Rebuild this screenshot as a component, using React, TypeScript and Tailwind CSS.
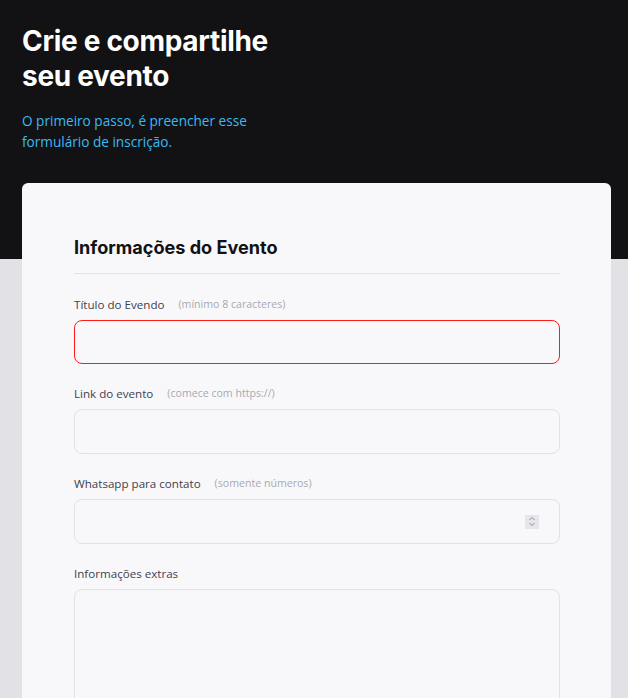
import React from "react";

const body = { fontFamily: '"Open Sans", "Liberation Sans", sans-serif' };

function Field({ label, hint, children }: { label: string; hint?: string; children: React.ReactNode }) {
  return (
    <div className="flex flex-col">
      <label className="flex items-center h-[18px] text-[11.6px] text-[#41414d]" style={body}>
        {label}
        {hint && <span className="ml-[14px] text-[10.6px] text-[#a8a8b3]">{hint}</span>}
      </label>
      {children}
    </div>
  );
}

export default function App() {
  return (
    <div className="min-h-[698px] bg-[#e1e1e6] relative" style={body}>
      <div className="bg-[#121214] h-[259px] px-[22px] pt-[24px]">
        <h1
          className="text-white font-bold text-[28px] leading-[35px] tracking-[-0.3px]"
          style={{ fontFamily: 'Inter, "Liberation Sans", sans-serif' }}
        >
          Crie e compartilhe
          <br />
          seu evento
        </h1>
        <p className="mt-[16px] text-[#3bb9f2] text-[13.6px] leading-[21px]">
          O primeiro passo, é preencher esse
          <br />
          formulário de inscrição.
        </p>
      </div>
      <div className="-mt-[76px] ml-[22px] w-[589px] bg-[#f8f8fa] rounded-t-[6px] pl-[52px] pr-[51px] pt-[50px] pb-[40px] min-h-[515px]">
        <h2
          className="text-[18.1px] font-bold text-[#121214] leading-[28px] pb-[12px] border-b border-[#e1e1e6]"
          style={{ fontFamily: 'Inter, "Liberation Sans", sans-serif' }}
        >
          Informações do Evento
        </h2>
        <div className="mt-[22px] flex flex-col gap-[21px]">
          <Field label="Título do Evendo" hint="(mínimo 8 caracteres)">
            <input className="mt-[6px] h-[44px] w-full rounded-[8px] border border-[#ff1a1a] bg-[#f8f8fa] outline-none" />
          </Field>
          <Field label="Link do evento" hint="(comece com https://)">
            <input className="mt-[6px] h-[45px] w-full rounded-[8px] border border-[#e1e1e6] bg-[#f8f8fa] outline-none" />
          </Field>
          <Field label="Whatsapp para contato" hint="(somente números)">
            <div className="mt-[6px] h-[45px] w-full rounded-[8px] border border-[#e1e1e6] bg-[#f8f8fa] flex items-center justify-end pr-[20px]">
              <div className="w-[14px] h-[14px] bg-[#e6e6ea] flex items-center justify-center">
                <svg width="8" height="11" viewBox="0 0 8 11" fill="none" stroke="#8d8d99" strokeWidth="1">
                  <path d="M1.5 4 L4 1.5 L6.5 4" />
                  <path d="M1.5 7 L4 9.5 L6.5 7" />
                </svg>
              </div>
            </div>
          </Field>
          <Field label="Informações extras">
            <textarea className="mt-[6px] h-[140px] w-full rounded-[8px] border border-[#e1e1e6] bg-[#f8f8fa] outline-none resize-none" />
          </Field>
        </div>
      </div>
    </div>
  );
}
